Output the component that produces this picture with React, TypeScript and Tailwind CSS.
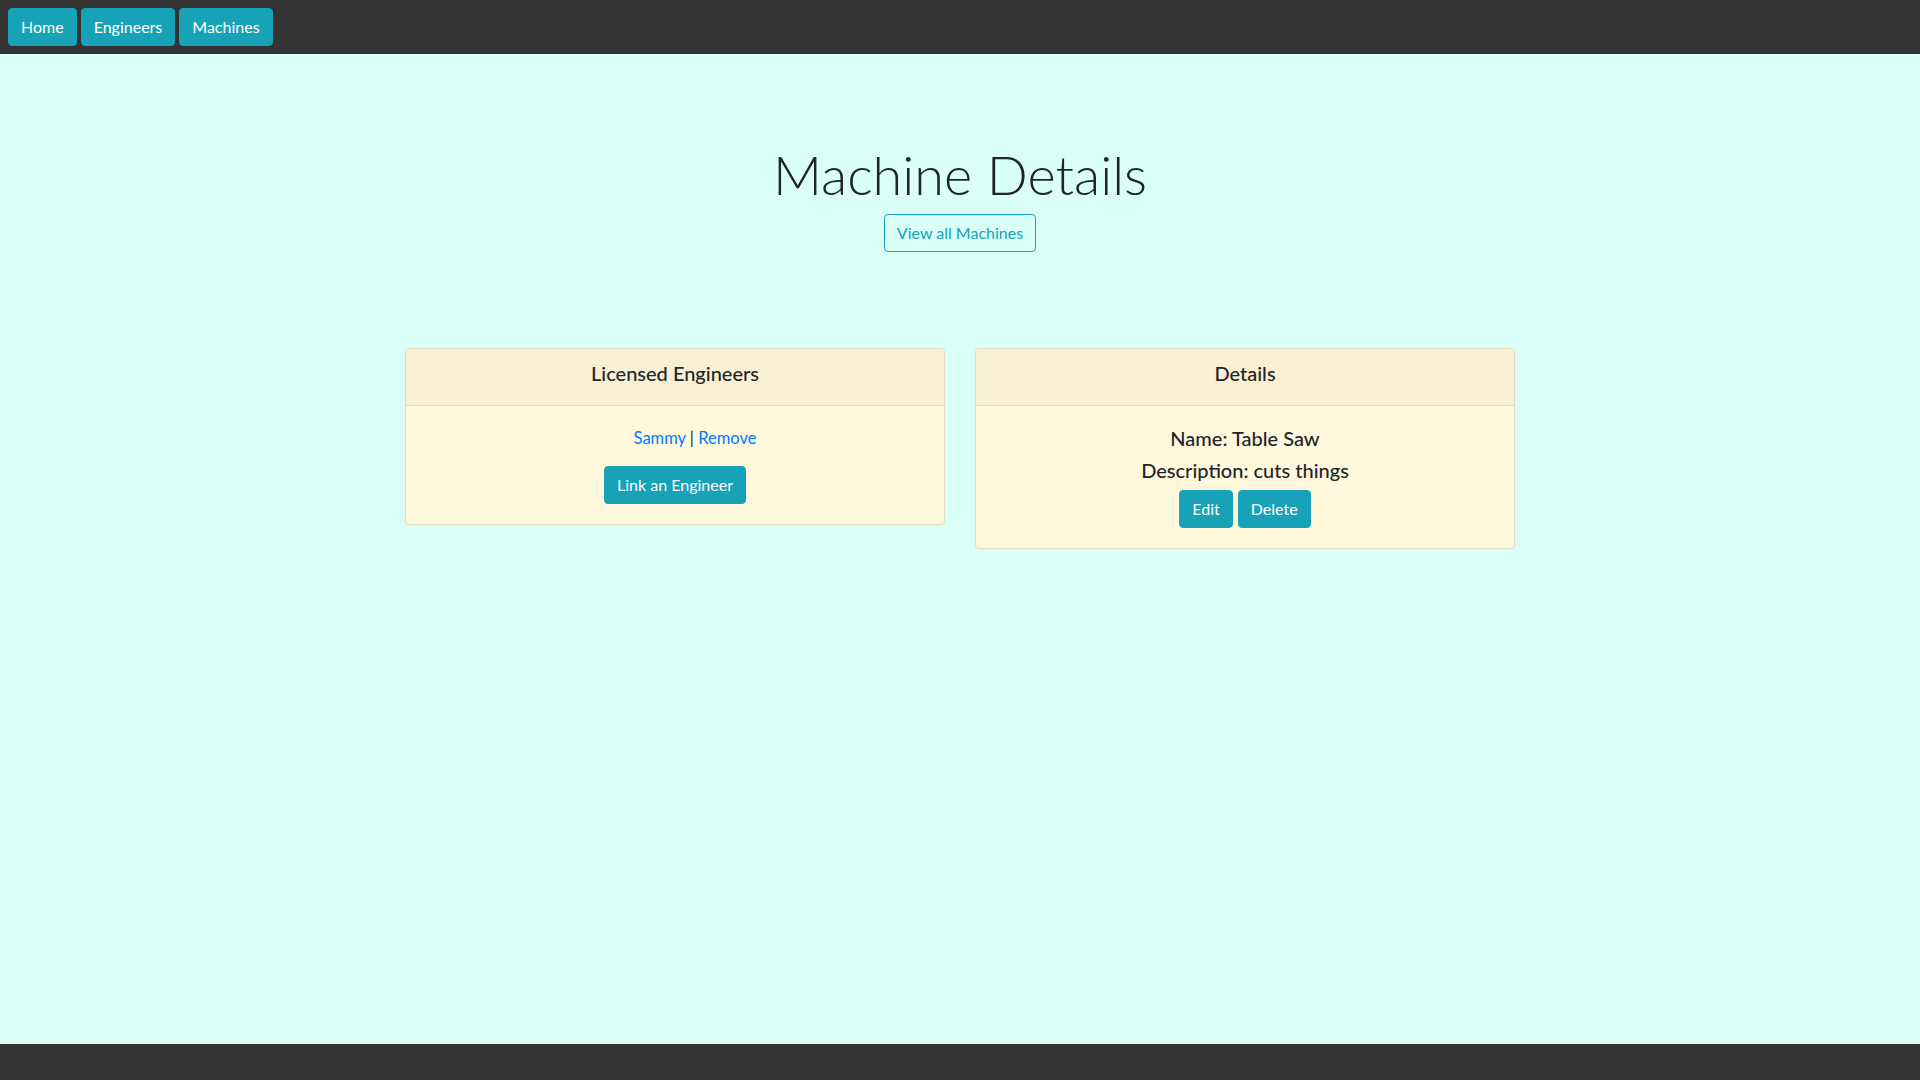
import React from "react";

const font = { fontFamily: '"Lato", "Noto Sans", sans-serif' };

function NavButton({ label }: { label: string }) {
  return (
    <button className="h-[38px] px-3 rounded-[4px] border border-[#17a2b8] bg-[#17a2b8] text-white text-[16px] leading-6">
      {label}
    </button>
  );
}

function Card({ title, children }: { title: string; children: React.ReactNode }) {
  return (
    <div className="flex-1 rounded-[4px] border border-[#e3dcbd] bg-[#fff8dc] overflow-hidden">
      <div className="bg-[#f9f0d3] border-b border-[#e3dcbd] px-5 pt-3 pb-3 text-center">
        <h5 className="text-[20px] leading-[24px] font-medium text-[#212529] mb-2">{title}</h5>
      </div>
      <div className="p-5 text-center">{children}</div>
    </div>
  );
}

export default function App() {
  return (
    <div className="min-h-screen flex flex-col bg-[#d9fff6] text-[#212529]" style={font}>
      <header className="h-[54px] bg-[#333333] flex items-start gap-1 px-2 pt-2">
        <NavButton label="Home" />
        <NavButton label="Engineers" />
        <NavButton label="Machines" />
      </header>

      <main className="flex-1">
        <div className="w-[1140px] mx-auto px-[15px]">
          <div className="flex flex-col items-center pt-[88px]">
            <h1 className="text-[54px] leading-[66px] font-light">Machine Details</h1>
            <button className="mt-[6px] h-[38px] px-3 rounded-[4px] border border-[#17a2b8] text-[#17a2b8] text-[16px]">
              View all Machines
            </button>
          </div>

          <div className="flex gap-[30px] items-start mt-[96px]">
            <Card title="Licensed Engineers">
              <ul className="pl-10 mb-4 list-none">
                <li className="text-[16.5px] leading-6">
                  <a className="text-[#007bff]">Sammy</a> | <a className="text-[#007bff]">Remove</a>
                </li>
              </ul>
              <button className="h-[38px] px-3 rounded-[4px] bg-[#17a2b8] border border-[#17a2b8] text-white text-[16px]">
                Link an Engineer
              </button>
            </Card>
            <Card title="Details">
              <h5 className="text-[20px] leading-[24px] font-medium mb-2">Name: Table Saw</h5>
              <h5 className="text-[20px] leading-[24px] font-medium mb-2">Description: cuts things</h5>
              <div className="flex justify-center gap-[5px]">
                <button className="h-[38px] px-3 rounded-[4px] bg-[#17a2b8] border border-[#17a2b8] text-white text-[16px]">
                  Edit
                </button>
                <button className="h-[38px] px-3 rounded-[4px] bg-[#17a2b8] border border-[#17a2b8] text-white text-[16px]">
                  Delete
                </button>
              </div>
            </Card>
          </div>
        </div>
      </main>

      <footer className="h-[36px] bg-[#333333]" />
    </div>
  );
}
